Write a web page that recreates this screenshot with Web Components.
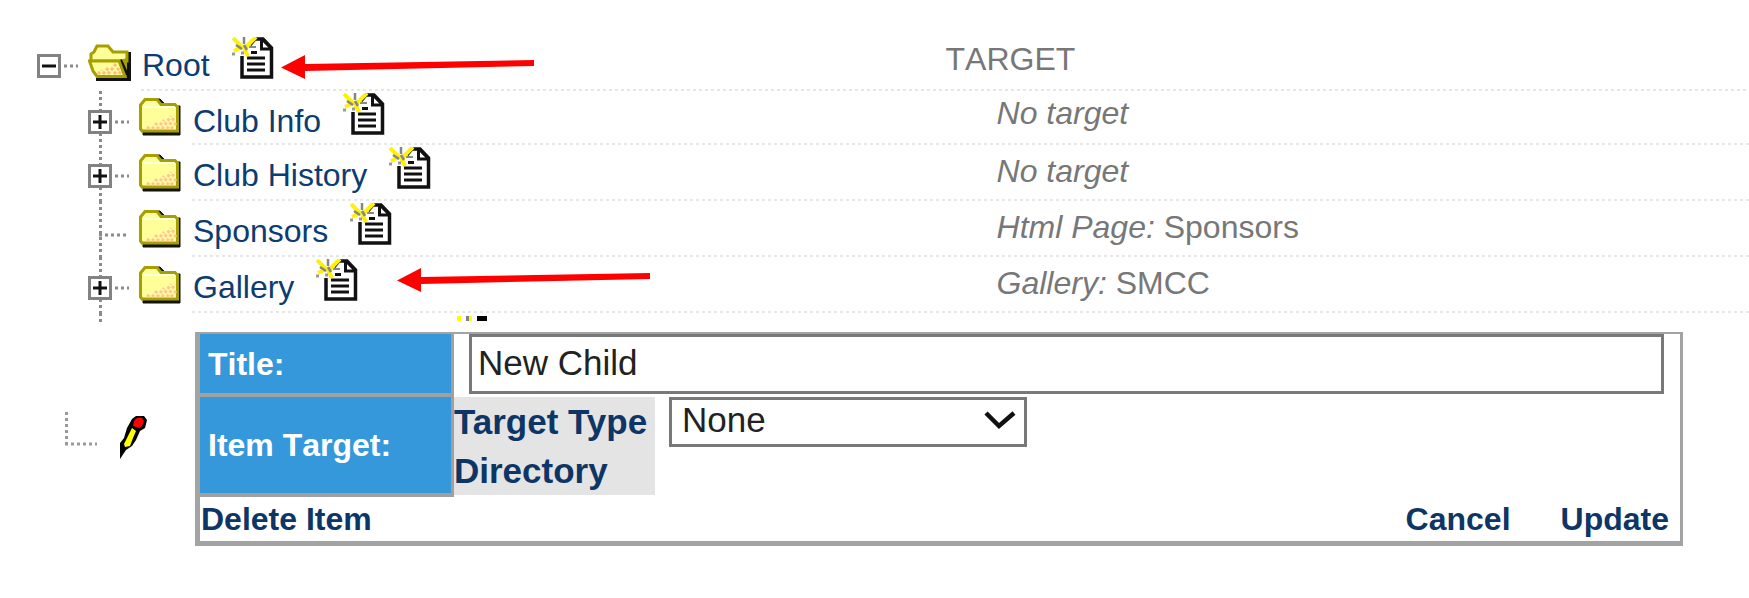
<!DOCTYPE html>
<html lang="en">
<head>
<meta charset="utf-8">
<title>Menu editor</title>
<style>
body{margin:0;background:#fff;font-family:"Liberation Sans",Arial,sans-serif;font-kerning:none}
</style>
</head>
<body>
<menu-editor></menu-editor>
<script>
const define=(name,html,setup)=>customElements.define(name,class extends HTMLElement{
  constructor(){
    super();
    const t=document.createElement('template');
    t.innerHTML=html;
    this.attachShadow({mode:'open'}).append(t.content.cloneNode(true));
  }
  connectedCallback(){ if(setup) setup(this,this.shadowRoot); }
});

define('new-page-icon',`
<style>:host{display:block;width:42px;height:42px;flex:none;overflow:hidden}svg{display:block}</style>
<svg width="42" height="42" viewBox="0 0 42 42" aria-hidden="true">
  <path d="M21 1.500H32L39.500 9V40H10V20L21 8Z" fill="#fff"/>
  <path d="M10 19V40H39.500V11L31 2H23L18 8" fill="none" stroke="#111" stroke-width="3.500"/>
  <path d="M29.500 1V12H40M31 3L38 10" fill="none" stroke="#111" stroke-width="3"/>
  <path d="M15 21H33M15 27H33M15 33H33M19 15.500H25" stroke="#111" stroke-width="3"/>
  <path d="M17 10H24" stroke="#888" stroke-width="2"/>
  <path d="M1 1L11 11M24 0L12 12M10 10L2 14M12 11L16 19" fill="none" stroke="#fff200" stroke-width="4"/>
  <path d="M12 0V7M4 8L10 12M12 8L15 13" stroke="#858585" stroke-width="2.500"/>
  <path d="M0 17H3M9 16H12" stroke="#999" stroke-width="3"/>
</svg>`);

define('folder-icon',`
<style>:host{display:block;width:53px;flex:none}svg{display:block}
.open{display:none}:host([open]) .open{display:block}:host([open]) .closed{display:none}</style>
<svg class="closed" width="53" height="38" viewBox="0 0 53 38" aria-hidden="true">
  <path d="M39 8H41V37H4V34H39ZM18 1H21L26 6H20Z" fill="#111" stroke="#111"/>
  <path d="M1.500 7L6 1.500H18L22 6.500H36L38.500 9V33H3L1.500 31Z" fill="#ffff99" stroke="#a5a000" stroke-width="3"/>
  <path d="M4 9H36" stroke="#ffffd8" stroke-width="2" fill="none"/>
  <path d="M8 31L11 28M13 31L18 25M18 31L25 22M23 31L32 18M28 31L36 18M32 31L37 25" stroke="#ffc49a" stroke-width="3" stroke-dasharray="3 2"/>
</svg>
<svg class="open" width="53" height="38" viewBox="0 0 53 38" aria-hidden="true">
  <path d="M40 8H43V37H8V33H38L33 17H38Z" fill="#111"/>
  <path d="M3 17V10L6 8L9 2H20L25 8H39V17Z" fill="#ffff99" stroke="#a5a000" stroke-width="3"/>
  <path d="M31 16L39 33V14Z" fill="#a5a000"/>
  <path d="M32 16L39 31" stroke="#111" stroke-width="4"/>
  <path d="M1.500 17H31L37 32.500H9L5 27Z" fill="#ffff99" stroke="#a5a000" stroke-width="3"/>
  <path d="M10 30L14 26M15 30L21 23M20 30L28 20M26 30L31 24M31 30L33 27" stroke="#ffb98c" stroke-width="3" stroke-dasharray="3 2"/>
</svg>`);

define('tree-toggle',`
<style>
:host{display:block;width:51px;height:100%;flex:none;box-sizing:border-box;padding-top:19px}
:host([line]){background:repeating-linear-gradient(#8a8a8a 0 3px,#fff 3px 6px) 11px 0/3px 100% no-repeat}
button{all:unset;display:block;height:24px}
svg{display:block}
.leaf{display:none}
:host([leaf]) button{display:none}
:host([leaf]) .leaf{display:block}
:host([open]) .v{display:none}
</style>
<button aria-label="Expand or collapse"><svg width="42" height="24" viewBox="0 0 42 24">
  <path d="M1.500 1.500H22.500V22.500H1.500Z" fill="#fff" stroke="#828282" stroke-width="3"/>
  <path d="M5 12H19" stroke="#111" stroke-width="3"/><path class="v" d="M12 5V19" stroke="#111" stroke-width="3"/>
  <path d="M27 12H41" stroke="#8a8a8a" stroke-width="3" stroke-dasharray="3 3"/>
</svg></button>
<svg class="leaf" width="42" height="24" viewBox="0 0 42 24" aria-hidden="true"><path d="M11 15H41" stroke="#8a8a8a" stroke-width="3" stroke-dasharray="3 3"/></svg>`);

define('tree-row',`
<style>
:host{display:flex;height:56px;padding-left:88px}
:host([root]){padding-left:37px}
:host([compact]){height:54px}
folder-icon{padding-top:9px;box-sizing:border-box}
:host([compact]) folder-icon{padding-top:7px}
.content{flex:1;display:flex;min-width:0;box-sizing:border-box;height:100%;
  background:repeating-linear-gradient(90deg,#e6e6e6 0 3px,#fff 3px 6px) 0 100%/100% 2px no-repeat}
.name{width:46vw;flex:none;display:flex;gap:22px}
a{color:#0d3c70;text-decoration:none;font-size:32px;line-height:48px;padding:6px 0 0 1px;white-space:nowrap}
new-page-icon{margin-top:2px}
.target{color:#777;font-size:32px;line-height:48px;padding-top:2px;white-space:nowrap}
:host([root]) .target,:host([compact]) .target{padding-top:0}
:host([compact]) .target{line-height:44px}
</style>
<tree-toggle></tree-toggle><folder-icon></folder-icon>
<div class="content"><div class="name"><a href="#"><slot></slot></a><new-page-icon></new-page-icon></div>
<div class="target"><slot name="target"></slot></div></div>`,(el,r)=>{
  const t=r.querySelector('tree-toggle');
  if(el.hasAttribute('root')){t.setAttribute('open','');r.querySelector('folder-icon').setAttribute('open','');}
  else t.setAttribute('line','');
  if(el.hasAttribute('leaf')) t.setAttribute('leaf','');
});

define('tree-stub',`
<style>
:host{display:flex;height:9px;padding-left:99px}
.line{width:3px;height:9px;background:linear-gradient(#8a8a8a 0 3px,#fff 3px 6px,#8a8a8a 6px)}
svg{display:block;margin:3px 0 0 355px}
</style>
<div class="line"></div>
<svg width="32" height="6" viewBox="0 0 32 6" aria-hidden="true"><path d="M0 0H4V5H0ZM12 0H15V5H12Z" fill="#ff0"/><path d="M9 0H12V5H9Z" fill="#808080"/><path d="M20 0H30V5H20Z" fill="#000"/></svg>`);

define('pencil-marker',`
<style>:host{display:block;width:130px;flex:none}svg{display:block}</style>
<svg width="90" height="50" viewBox="0 0 90 50" aria-hidden="true">
  <path d="M1.500 3V35M0 35H32" fill="none" stroke="#999" stroke-width="3" stroke-dasharray="3 3"/>
  <path d="M55 50V34L59 29L62 19L67 10L71 7H79L82 11L80 19L75 22L71 31L67 37L61 41Z" fill="#000"/>
  <path d="M59 35L67 19L71 22L68 29L65 37L60 38Z" fill="#ff0"/>
  <path d="M69 12L72 9H77L79 12L77 17L74 19L68 17Z" fill="#f00"/>
</svg>`);

define('item-form',`
<style>
:host{display:block;flex:1;min-width:0}
form{display:block;box-sizing:border-box;border:solid #a3a3a3;border-width:2px 3px 5px 5px;color:#0d3565}
.row{display:grid;grid-template-columns:254px 1fr}
.head{background:#3498db;color:#fff;font-weight:bold;font-size:32px;border:solid #a0a0a0;border-width:0 3px 4px 0;box-sizing:border-box;display:flex;align-items:center;padding-left:8px}
.title{height:63px}
.title .head{padding-top:2px}
.cell{padding:0 16px 0 15px}
input,select{box-sizing:border-box;border:3px solid #787878;border-radius:0;background:#fff;color:#222;font:35px "Liberation Sans",Arial,sans-serif;font-kerning:none;margin:0;outline:0;display:block}
input{width:100%;height:60px;padding:0 6px 2px}
.item{height:100px}
.fields{display:flex;gap:14px;align-items:flex-start}
.type{background:#e4e4e4;width:201px;height:98px;font:bold 35px/51px "Liberation Sans",Arial,sans-serif;white-space:nowrap;overflow:hidden;box-sizing:border-box}
.type span{display:block;line-height:49px}
.pick{position:relative;width:358px}
select{appearance:none;width:100%;height:50px;padding:0 8px 5px 10px}
.pick svg{position:absolute;right:11px;top:12px;pointer-events:none}
footer{display:flex;gap:50px;height:44px;padding:0 11px 0 1px;font-size:32px;font-weight:bold;line-height:44px}
a{color:inherit;text-decoration:none}
.del{margin-right:auto}
</style>
<form>
  <div class="row title"><label class="head" for="t">Title:</label><div class="cell"><input id="t" type="text" value="New Child"></div></div>
  <div class="row item"><div class="head">Item Target:</div>
    <div class="fields"><label class="type" for="s"><span>Target Type</span><span>Directory</span></label>
    <div class="pick"><select id="s"><option>None</option></select>
      <svg width="32" height="22" viewBox="0 0 32 22" aria-hidden="true"><path d="M2 4L15 17L30 4" fill="none" stroke="#111" stroke-width="4.500"/></svg></div></div></div>
  <footer><a class="del" href="#">Delete Item</a><a href="#">Cancel</a><a href="#">Update</a></footer>
</form>`);

define('pointer-arrow',`
<style>:host{display:block;position:absolute}svg{display:block}</style>
<svg width="254" height="26" viewBox="0 0 254 26" aria-hidden="true"><path d="M0 13.500L24 1V10L253 6V12L24 17V25Z" fill="#f00"/></svg>`);

define('menu-editor',`
<style>
:host{display:block;position:relative;padding-top:35px;overflow:hidden}
.edit{display:flex;margin:10px 66px 0 65px}
pencil-marker{padding-top:77px;box-sizing:border-box}
.a1{left:281px;top:54px}
.a2{left:397px;top:267px}
</style>
<tree-row root>Root<span slot="target">TARGET</span></tree-row>
<tree-row compact>Club Info<i slot="target">No target</i></tree-row>
<tree-row>Club History<i slot="target">No target</i></tree-row>
<tree-row leaf>Sponsors<span slot="target"><i>Html Page:</i> Sponsors</span></tree-row>
<tree-row>Gallery<span slot="target"><i>Gallery:</i> SMCC</span></tree-row>
<tree-stub></tree-stub>
<div class="edit"><pencil-marker></pencil-marker><item-form></item-form></div>
<pointer-arrow class="a1"></pointer-arrow><pointer-arrow class="a2"></pointer-arrow>`);
</script>
</body>
</html>
